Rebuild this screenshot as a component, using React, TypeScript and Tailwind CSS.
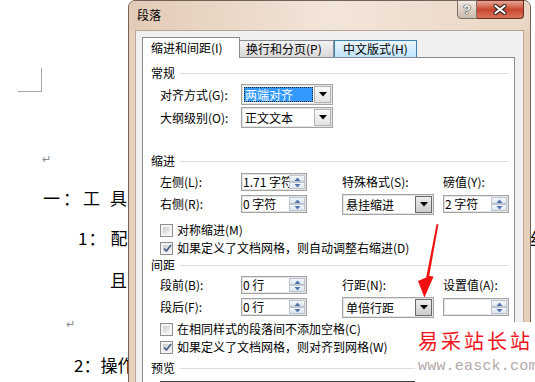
import React from "react";

function Check({ checked }: { checked?: boolean }) {
  return (
    <span className="w-[13px] h-[13px] shrink-0 border border-[#8e8f8f] bg-[#f4f4f4] p-[2px] flex">
      <span className="flex-1 flex items-center justify-center bg-gradient-to-br from-[#cbcbcb] to-[#f7f7f7]">
        {checked && (
          <svg width="9" height="9" viewBox="0 0 9 9" className="block">
            <path d="M1 4.5 L3.4 7 L8 1" stroke="#4a5f8f" strokeWidth="1.7" fill="none" />
          </svg>
        )}
      </span>
    </span>
  );
}

function SpinBtn({ up }: { up?: boolean }) {
  return (
    <div className="flex-1 flex items-center justify-center bg-gradient-to-b from-[#f4f7fb] to-[#dde5ee] border border-[#bcc5d0]">
      <svg width="7" height="4" viewBox="0 0 7 4" className="block">
        <path d={up ? "M0.5 4 L3.5 0.5 L6.5 4Z" : "M0.5 0 L6.5 0 L3.5 3.5Z"} fill="#5073b0" />
      </svg>
    </div>
  );
}

function Spin({ value }: { value: string }) {
  return (
    <div className="w-[66px] h-[18px] border border-[#a3a3a3] bg-white flex p-px shadow-[inset_0_0_0_1px_#e4e4e4]">
      <div className="flex-1 overflow-hidden whitespace-nowrap text-[12px] leading-[14px]">{value}</div>
      <div className="w-[16px] flex flex-col">
        <SpinBtn up />
        <SpinBtn />
      </div>
    </div>
  );
}

function Select({ value, highlight, hot }: { value: string; highlight?: boolean; hot?: boolean }) {
  return (
    <div className="w-[92px] h-[21px] border border-[#a3a3a3] bg-white flex p-px shadow-[inset_0_0_0_1px_#e4e4e4]">
      {highlight ? (
        <div className="flex-1 m-px mr-[1px] bg-[#3399ff] text-white outline outline-1 outline-dotted outline-[#222] -outline-offset-1 text-[12px] leading-[15px] pl-px whitespace-nowrap overflow-hidden">
          {value}
        </div>
      ) : (
        <div className="flex-1 text-[12px] leading-[17px] pl-[2px] whitespace-nowrap overflow-hidden">{value}</div>
      )}
      <div
        className={
          hot
            ? "w-[17px] flex items-center justify-center border border-[#6a6a6a] bg-gradient-to-b from-[#ededed] to-[#cdcdcd]"
            : "w-[17px] flex items-center justify-center border border-[#b2b2b2] bg-gradient-to-b from-[#fafafa] to-[#e2e2e2]"
        }
      >
        <svg width="8" height="5" viewBox="0 0 8 5" className="block">
          <path d="M0 0 L8 0 L4 4.5Z" fill="#000" />
        </svg>
      </div>
    </div>
  );
}

function Header({ title, className }: { title: string; className: string }) {
  return (
    <div className={className}>
      <span className="pl-[8px] pr-[5px] text-[12px] leading-[16px]">{title}</span>
      <span className="flex-1 h-px bg-[#d5dfe5] mr-[5px]" />
    </div>
  );
}

function Label({ children }: { children: React.ReactNode }) {
  return <span className="text-[12px] leading-[16px] whitespace-nowrap">{children}</span>;
}

function CheckRow({ checked, text }: { checked?: boolean; text: string }) {
  return (
    <div className="h-[18px] pl-[17px] flex items-center gap-[4px]">
      <Check checked={checked} />
      <span className="text-[12px] leading-[16px] whitespace-nowrap">{text}</span>
    </div>
  );
}

export default function App() {
  return (
    <div className="relative w-[535px] h-[382px] overflow-hidden bg-white text-black font-['Noto_Sans_CJK_SC',sans-serif]">
      {/* document */}
      <div className="flex flex-col">
        <div className="ml-[18px] mt-[68px] w-[24px] h-[24px] border-r border-b border-[#a6a6a6]" />
        <div className="ml-[42px] mt-[59px] h-[14px] text-[11px] leading-[14px] text-[#8a8a8a]">↵</div>
        <div className="mt-[21px] h-[24px] pl-[43px] flex text-[17px] leading-[24px] whitespace-nowrap">
          <span>一</span>
          <span className="ml-[3px]">：</span>
          <span className="ml-[3px]">工</span>
          <span className="ml-[10px]">具</span>
        </div>
        <div className="mt-[16px] h-[24px] pl-[78px] flex text-[17px] leading-[24px] whitespace-nowrap">
          <span>1</span>
          <span className="ml-[1px]">：</span>
          <span className="ml-[5px]">配</span>
          <span className="ml-[395px]">丝</span>
        </div>
        <div className="mt-[18px] h-[24px] pl-[110px] text-[17px] leading-[24px]">且</div>
        <div className="ml-[66px] mt-[24px] h-[14px] text-[11px] leading-[14px] text-[#8a8a8a]">↵</div>
        <div className="mt-[23px] h-[24px] pl-[74px] flex text-[17px] leading-[24px] whitespace-nowrap">
          <span>2</span>
          <span>：</span>
          <span>操</span>
          <span>作</span>
        </div>
      </div>

      {/* dialog */}
      <div className="absolute left-[128px] top-0 w-[403px] h-[470px] rounded-t-[7px] border border-[#6f6258] bg-[#e6cfbb] flex flex-col">
        <div className="shrink-0 h-[29px] flex items-start justify-between rounded-t-[6px] bg-gradient-to-r from-[#e3cbb6] via-[#f2e5d9] to-[#ead6c4]">
          <span className="pl-[8px] pt-[6px] text-[12px] leading-[16px]">段落</span>
          <div className="flex mr-[6px] -mt-px">
            <div className="w-[20px] h-[19px] border border-[#7b6f66] rounded-bl-[4px] bg-gradient-to-b from-[#f2ebe5] via-[#ddd1c6] to-[#c8bcb1] flex items-center justify-center">
              <span className="text-[13px] leading-[13px] font-bold text-white [text-shadow:0_0_1px_#333,0_0_1px_#333,0_0_1px_#333] font-['Liberation_Sans',sans-serif]">?</span>
            </div>
            <div className="w-[47px] h-[19px] border border-l-0 border-[#6b2b22] rounded-br-[4px] bg-gradient-to-b from-[#e3a796] via-[#c9452f] to-[#d8735c] flex items-center justify-center">
              <svg width="14" height="11" viewBox="0 0 14 11" className="block">
                <path d="M2.5 2 L11.5 9 M11.5 2 L2.5 9" stroke="#3b2a26" strokeWidth="4.2" strokeLinecap="round" />
                <path d="M2.5 2 L11.5 9 M11.5 2 L2.5 9" stroke="#ffffff" strokeWidth="2.2" strokeLinecap="round" />
              </svg>
            </div>
          </div>
        </div>

        <div className="mx-[6px] flex-1 border border-[#b8a596] bg-[#f0f0f0] pl-[6px] pr-[8px] pt-[6px] flex flex-col">
          {/* tabs */}
          <div className="shrink-0 h-[20px] flex items-end">
            <div className="relative z-10 -mb-px w-[98px] h-[21px] bg-white border border-b-0 border-[#898c95] pl-[8px] text-[12px] leading-[20px] whitespace-nowrap">
              缩进和间距(I)
            </div>
            <div className="w-[94px] h-[17px] border border-b-0 border-l-0 border-[#898c95] bg-gradient-to-b from-[#f3f3f3] to-[#d8d8d8] pl-[6px] text-[12px] leading-[16px] whitespace-nowrap">
              换行和分页(P)
            </div>
            <div className="w-[83px] h-[17px] border border-b-0 border-[#3c7fb1] bg-gradient-to-b from-[#eaf6fd] to-[#bfe4fb] pl-[8px] text-[12px] leading-[16px] whitespace-nowrap">
              中文版式(H)
            </div>
          </div>

          {/* panel */}
          <div className="flex-1 border border-[#898c95] bg-white pt-[7px] flex flex-col">
            <Header title="常规" className="h-[16px] flex items-center" />
            <div className="mt-[2px] pl-[17px] grid grid-cols-[81px_101px_101px_64px] auto-rows-[23px] items-center">
              <Label>对齐方式(G):</Label>
              <div className="col-span-3">
                <Select value="两端对齐" highlight />
              </div>
              <Label>大纲级别(O):</Label>
              <div className="col-span-3">
                <Select value="正文文本" />
              </div>
            </div>

            <Header title="缩进" className="mt-[24px] h-[16px] flex items-center" />
            <div className="mt-[2px] pl-[17px] grid grid-cols-[81px_101px_101px_64px] auto-rows-[22px] items-center">
              <Label>左侧(L):</Label>
              <Spin value="1.71 字符" />
              <Label>特殊格式(S):</Label>
              <Label>磅值(Y):</Label>
              <Label>右侧(R):</Label>
              <Spin value="0 字符" />
              <Select value="悬挂缩进" hot />
              <Spin value="2 字符" />
            </div>

            <div className="mt-[6px] flex flex-col">
              <CheckRow text="对称缩进(M)" />
              <CheckRow checked text="如果定义了文档网格，则自动调整右缩进(D)" />
            </div>

            <Header title="间距" className="h-[16px] flex items-center" />
            <div className="mt-[1px] pl-[17px] grid grid-cols-[81px_101px_101px_64px] auto-rows-[22px] items-center">
              <Label>段前(B):</Label>
              <Spin value="0 行" />
              <Label>行距(N):</Label>
              <Label>设置值(A):</Label>
              <Label>段后(F):</Label>
              <Spin value="0 行" />
              <Select value="单倍行距" hot />
              <Spin value="" />
            </div>

            <div className="mt-[2px] flex flex-col">
              <CheckRow text="在相同样式的段落间不添加空格(C)" />
              <CheckRow checked text="如果定义了文档网格，则对齐到网格(W)" />
            </div>

            <Header title="预览" className="mt-[4px] h-[16px] flex items-center" />
            <div className="mt-[5px] ml-[17px] mr-[6px] h-[60px] border border-[#404040] bg-white" />
          </div>
        </div>
      </div>

      {/* red arrow annotation */}
      <svg className="absolute left-0 top-0" width="535" height="382" viewBox="0 0 535 382">
        <path d="M436.6 224 L438.4 224.6 L429.2 276 L433.6 276.5 L424.4 297.5 L418 281 L426.2 277.6 Z" fill="#f01010" />
      </svg>

      {/* watermark */}
      <div className="absolute left-[415px] top-[322px] w-[120px] h-[60px] bg-white flex flex-col">
        <div className="pl-[3px] pt-[8px] h-[32px] text-[20px] leading-[22px] tracking-[3px] text-[#f0141c] whitespace-nowrap">
          易采站长站
        </div>
        <div className="pl-[3px] pt-[4px] text-[15px] leading-[18px] tracking-[0.2px] text-[#b3a9a9] whitespace-nowrap font-['Liberation_Mono',monospace]">
          www.easck.com
        </div>
      </div>
    </div>
  );
}
